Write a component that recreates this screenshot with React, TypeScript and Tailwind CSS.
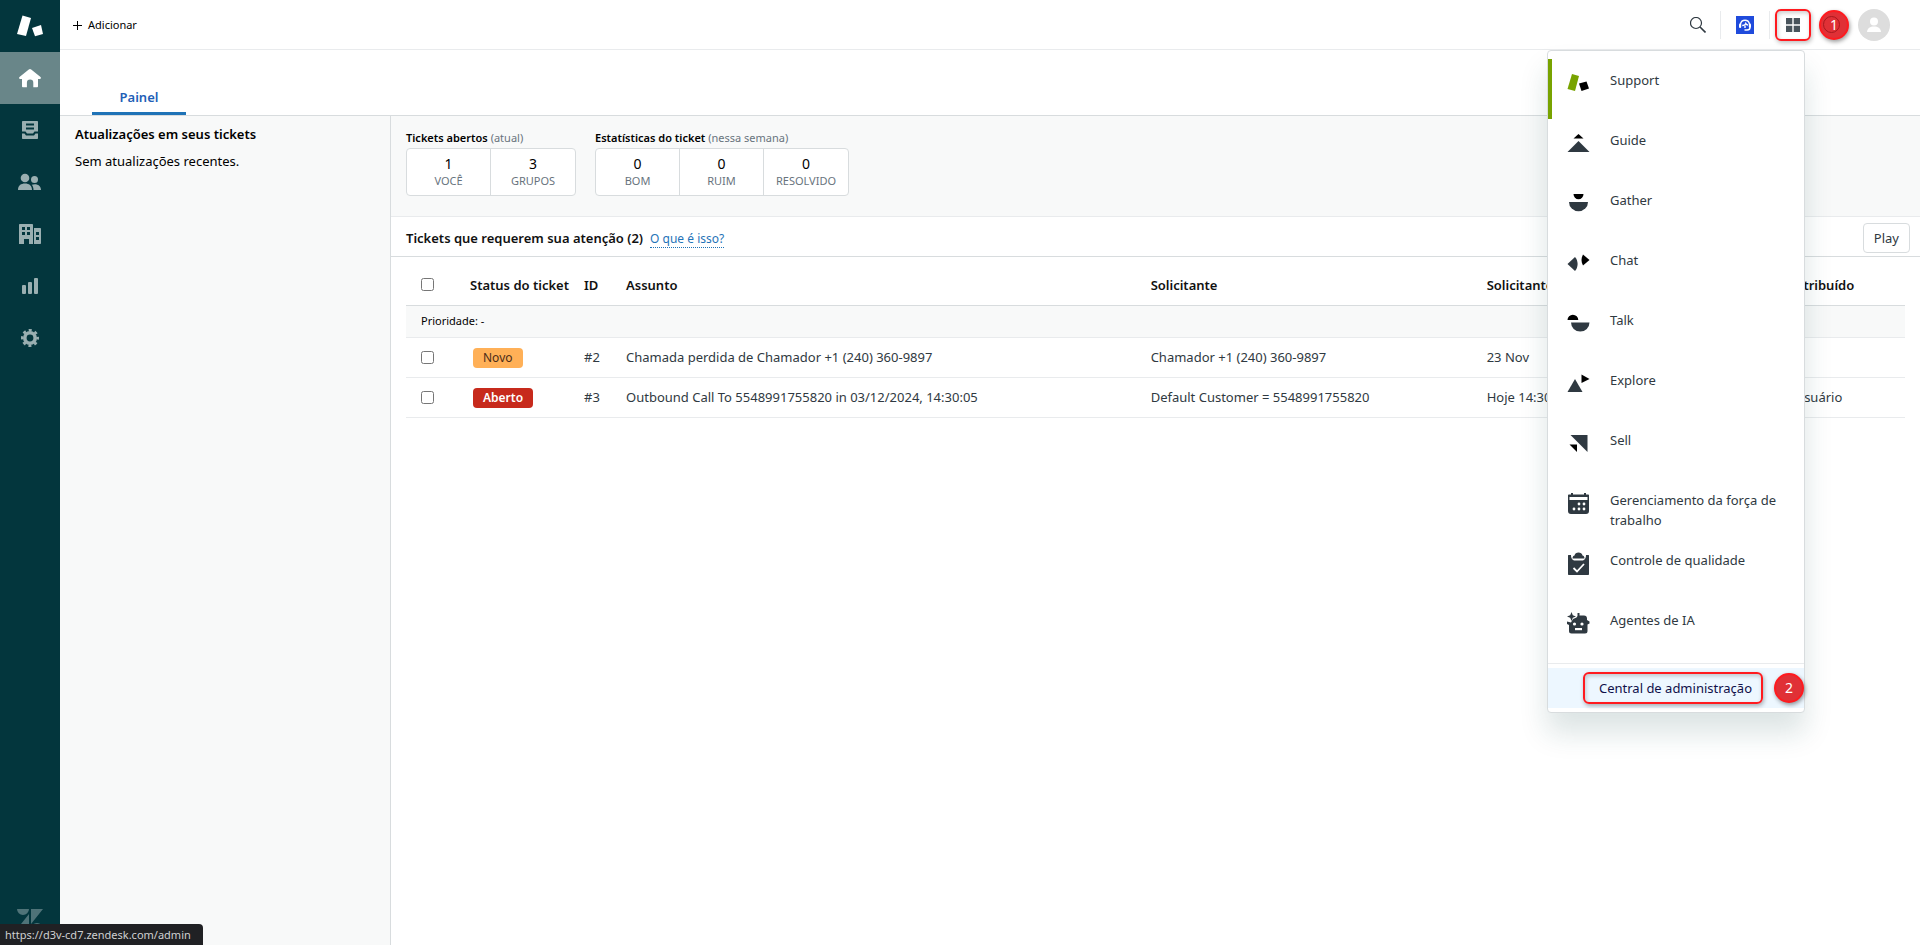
import type { ReactNode } from "react";

function SupportLogo({ a, b }: { a: string; b: string }) {
  return (
    <svg width="26" height="26" viewBox="0 0 26 26" aria-hidden="true">
      <path d="M5.500 2.500 14 5 9 23 0 21z" fill={a} />
      <path d="M15 15 24 12 26 21 18 23.200z" fill={b} />
    </svg>
  );
}

const nav: { label: string; icon: ReactNode }[] = [
  {
    label: "Início",
    icon: (
      <path d="M13 4c.4 0 .8.2 1.200.5l9.300 7.600c.9.800.4 2-.7 2H21v7.100c0 .6-.5 1.100-1.100 1.100h-3.600v-4.500a3.200 3.200 0 0 0-6.400 0v4.500H6.200c-.7 0-1.200-.5-1.200-1.100v-7.100H3.200c-1.100 0-1.600-1.200-.7-2l9.300-7.600c.4-.3.800-.5 1.200-.5z" />
    ),
  },
  {
    label: "Visualizações",
    icon: (
      <path
        fillRule="evenodd"
        d="M6 4h14c.6 0 1 .4 1 1v9.500h-3.500l-1.500 2h-6l-1.500-2H5V5c0-.6.400-1 1-1zm3 2.500v2h8v-2zm0 4v2h8v-2zM5 16.500h2.500l1.500 2h8l1.500-2H21V21c0 .6-.4 1-1 1H6c-.6 0-1-.4-1-1z"
      />
    ),
  },
  {
    label: "Clientes",
    icon: (
      <>
        <circle cx="8" cy="9" r="4.300" />
        <circle cx="17.500" cy="10.500" r="3.500" />
        <path d="M1 21c0-4.500 3-6.500 7-6.500s7 2 7 6.500zM16.500 21c0-2-.5-3.800-1.800-5.200 4.300-1.800 9.300.2 9.300 5.200z" />
      </>
    ),
  },
  {
    label: "Organizações",
    icon: (
      <path
        fillRule="evenodd"
        d="M3 3h12c.6 0 1 .4 1 1v19h-4v-5H7v5H2V4c0-.6.400-1 1-1zm2 3v3h3V6zm5 0v3h3V6zm-5 5v3h3v-3zm5 0v3h3v-3zM17 7h6c.6 0 1 .4 1 1v14c0 .6-.4 1-1 1h-6zm2 4v3h3v-3zm0 5v3h3v-3z"
      />
    ),
  },
  {
    label: "Relatórios",
    icon: (
      <>
        <rect x="5" y="12" width="4" height="9" rx="1" />
        <rect x="11" y="9" width="4" height="12" rx="1" />
        <rect x="17" y="5" width="4" height="16" rx="1" />
      </>
    ),
  },
  {
    label: "Configurações",
    icon: (
      <>
        <circle cx="13" cy="13" r="5.200" fill="none" stroke="currentColor" strokeWidth="3.600" />
        <circle cx="13" cy="13" r="7.800" fill="none" stroke="currentColor" strokeWidth="2.400" strokeDasharray="3.063 3.063" strokeDashoffset="1.530" />
      </>
    ),
  },
];

const dark = "#2f3941";
const products: { label: string; icon: ReactNode }[] = [
  {
    label: "Support",
    icon: (
      <>
        <path d="M5 2 12 4 8 19 .5 17z" fill="#78a300" />
        <path d="M12 11.500 19.500 9.500 22 16.500 14.500 19z" fill="#000" />
      </>
    ),
  },
  {
    label: "Guide",
    icon: (
      <>
        <path d="M11.500 2 16.500 6.500h-10z" fill="#000" />
        <path d="M11.500 9 22.500 20H.5z" fill={dark} />
      </>
    ),
  },
  {
    label: "Gather",
    icon: (
      <>
        <path d="M6.500 2h10a5 5.300 0 0 1-10 0z" fill="#000" />
        <path d="M2 10h19a9.500 9.300 0 0 1-19 0z" fill={dark} />
      </>
    ),
  },
  {
    label: "Chat",
    icon: (
      <>
        <path d="M8 5c3.500 4 3.500 10 0 14L.5 12z" fill={dark} />
        <path d="M16 2.500 22.500 8 16 13.500c-2-3.500-2-7.500 0-11z" fill="#000" />
      </>
    ),
  },
  {
    label: "Talk",
    icon: (
      <>
        <path d="M.5 8a5.400 5.200 0 0 1 10.800 0z" fill="#000" />
        <path d="M4 10.500h18.500a9.200 9 0 0 1-18.500 0z" fill={dark} />
      </>
    ),
  },
  {
    label: "Explore",
    icon: (
      <>
        <path d="M8 7 15.500 20H.5z" fill={dark} />
        <path d="M14.500 2.500 22.500 7l-8 4z" fill="#000" />
      </>
    ),
  },
  {
    label: "Sell",
    icon: (
      <>
        <path d="M3.500 3h17v17z" fill={dark} />
        <path d="M2.500 12.500h7.500V20z" fill="#000" />
      </>
    ),
  },
  {
    label: "Gerenciamento da força de trabalho",
    icon: (
      <g fill={dark}>
        <path d="M2 2.500h2V1h2v1.500h11V1h2v1.500h2c.6 0 1 .4 1 1V19a3 3 0 0 1-3 3H4a3 3 0 0 1-3-3V3.500c0-.6.400-1 1-1z" />
        <g fill="#fff">
          <path d="M2.500 5h18v3h-18z" />
          <circle cx="12" cy="12" r="1.400" />
          <circle cx="17" cy="12" r="1.400" />
          <circle cx="7" cy="17" r="1.400" />
          <circle cx="12" cy="17" r="1.400" />
          <circle cx="17" cy="17" r="1.400" />
        </g>
      </g>
    ),
  },
  {
    label: "Controle de qualidade",
    icon: (
      <>
        <path d="M1.500 3H4c0 4 2 5.500 4 5.500h7c2 0 4-1.500 4-5.500h2.500c.3 0 .5.2.5.5V22c0 .6-.4 1-1 1H2c-.6 0-1-.4-1-1V3.500c0-.3.200-.5.500-.5z" fill={dark} />
        <path d="M5.500 6.500c0-2 1-3 2-3C7.800 1.500 9.500.5 11.500.5s3.700 1 4 3c1 0 2 1 2 3z" fill={dark} />
        <path d="m6.500 16 3.500 3.500 7-7.500" fill="none" stroke="#fff" strokeWidth="1.800" />
      </>
    ),
  },
  {
    label: "Agentes de IA",
    icon: (
      <>
        <path d="M4.500 0 5.800 3.200 9 4.500 5.800 5.800 4.500 9 3.200 5.800 0 4.500 3.200 3.200z" fill={dark} />
        <path d="M10.500 4V1h2v2.500H17c1.900 0 3 1.300 3 3V8l2.500 1.500v2l-2 1V19a2.500 2.500 0 0 1-2.500 2.500H4.500A2.500 2.500 0 0 1 2 19v-6l-2-1V9.500l4 1 2-3.500 3.500-1.500z" fill={dark} />
        <circle cx="7.500" cy="12" r="1.600" fill="#fff" />
        <circle cx="15" cy="12" r="1.600" fill="#fff" />
        <path d="M8 16h7v2.200H8z" fill="#fff" />
      </>
    ),
  },
];

function StatGroup({ title, note, items }: { title: string; note: string; items: [string, string][] }) {
  return (
    <section>
      <h3 className="text-[11px] leading-5 font-semibold text-black">
        {title} <span className="font-normal text-[#68737d]">{note}</span>
      </h3>
      <dl className="flex divide-x divide-[#d8dcde] rounded border border-[#d8dcde] bg-white">
        {items.map(([value, label]) => (
          <div key={label} className="flex h-[46px] w-[84px] flex-col-reverse items-center justify-center text-center">
            <dt className="text-[11px] leading-4 text-[#68737d]">{label}</dt>
            <dd className="text-[14px] leading-[18px] text-black">{value}</dd>
          </div>
        ))}
      </dl>
    </section>
  );
}

const tickets = [
  {
    status: "Novo",
    badge: "bg-[#ffb057] text-[#4c2c17]",
    id: "#2",
    subject: "Chamada perdida de Chamador +1 (240) 360-9897",
    requester: "Chamador +1 (240) 360-9897",
    updated: "23 Nov",
    assignee: "",
  },
  {
    status: "Aberto",
    badge: "bg-[#c72a1c] text-white font-semibold",
    id: "#3",
    subject: "Outbound Call To 5548991755820 in 03/12/2024, 14:30:05",
    requester: "Default Customer = 5548991755820",
    updated: "Hoje 14:30",
    assignee: "Usuário",
  },
];

const check = "block size-[13px]";

function StepBadge({ n }: { n: number }) {
  return (
    <span className="flex size-[30px] shrink-0 items-center justify-center rounded-full border-2 border-[#ff1a1f] bg-[#e03036] text-[14px] text-white shadow-[1px_2px_4px_rgba(0,0,0,0.4)]">
      {n}
    </span>
  );
}

export default function App() {
  return (
    <div className="flex min-h-screen bg-white font-['Noto_Sans','Open_Sans',sans-serif] text-[13px] leading-5 text-[#2f3941]">
      <nav aria-label="Principal" className="flex w-[60px] shrink-0 flex-col items-center bg-[#03363d] text-[#9aafb1]">
        <div className="flex h-[52px] items-center">
          <SupportLogo a="#fff" b="#fff" />
        </div>
        {nav.map(({ label, icon }, i) => (
          <a
            key={label}
            href="#"
            aria-label={label}
            className={i === 0 ? "flex h-[52px] w-full items-center justify-center bg-[#698689] text-white" : "flex h-[52px] w-full items-center justify-center"}
          >
            <svg width="26" height="26" viewBox="0 0 26 26" fill="currentColor" aria-hidden="true">
              {icon}
            </svg>
          </a>
        ))}
        <svg className="mt-auto mb-4 text-[#4f7378]" width="26" height="20" viewBox="0 0 26 20" fill="currentColor" aria-hidden="true">
          <path d="M0 0h12a6 6 0 0 1-12 0zM12 5v15H0zM14 0h12L14 15zM14 20a6 6 0 0 1 12 0z" />
        </svg>
      </nav>

      <div className="flex min-w-0 flex-1 flex-col">
        <header className="relative flex h-[50px] shrink-0 items-center border-b border-[#e9ebed] bg-white">
          <button type="button" className="flex items-center gap-1.5 pt-px pl-[13px] text-[11px] text-black">
            <svg width="9" height="9" viewBox="0 0 9 9" stroke="currentColor" aria-hidden="true">
              <path d="M4.500 0v9M0 4.500h9" />
            </svg>
            Adicionar
          </button>

          <div className="ml-auto flex items-center pr-[30px]">
            <button type="button" aria-label="Pesquisar" className="pr-3.5">
              <svg width="16" height="16" viewBox="0 0 16 16" fill="none" stroke="#2f3941" aria-hidden="true">
                <circle cx="6" cy="6" r="5.500" strokeWidth="1.200" />
                <path d="m10 10 5.500 5.500" strokeWidth="1.600" />
              </svg>
            </button>
            <span className="h-7 w-px bg-[#e9ebed]" />
            <button type="button" aria-label="Atendimento" className="px-[15px]">
              <svg width="18" height="18" viewBox="0 0 18 18" aria-hidden="true">
                <path d="M0 0h18v18H0z" fill="#1f4bdc" />
                <path d="M4.500 8a4.600 4.800 0 0 1 9 0" fill="none" stroke="#fff" strokeWidth="1.400" />
                <rect x="3" y="7.500" width="2.200" height="4.500" rx="1" fill="#fff" />
                <rect x="12.800" y="7.500" width="2.200" height="4.500" rx="1" fill="#fff" />
                <path d="M6.200 9.500c2 0 3.200-.8 3.600-2 .5 1 1.200 1.500 2.200 1.500" fill="none" stroke="#fff" strokeWidth="1.400" />
                <path d="M9 9.500v2.500M14 11.500c0 1.700-1 2.500-2.800 2.500H8.500" fill="none" stroke="#fff" strokeWidth="1.400" />
              </svg>
            </button>
            <span className="h-7 w-px bg-[#e9ebed]" />
            <button
              type="button"
              aria-label="Produtos do Zendesk"
              className="ml-[5px] flex h-8 w-9 items-center justify-center rounded-md border-2 border-[#ff1a1f] shadow-[1px_2px_4px_rgba(0,0,0,0.25),inset_1px_2px_4px_rgba(0,0,0,0.2)]"
            >
              <svg width="14" height="14" viewBox="0 0 14 14" fill="#49545c" aria-hidden="true">
                <path d="M0 0h6.300v6.300H0zM7.700 0H14v6.300H7.700zM0 7.700h6.300V14H0zM7.700 7.700H14V14H7.700z" />
              </svg>
            </button>
            <span className="relative ml-2">
              <StepBadge n={1} />
              <span className="absolute top-1.5 left-1 size-[17px] rounded-full border border-[#a8181d]" />
            </span>
            <button type="button" aria-label="Perfil" className="ml-[9px] size-8 rounded-full bg-[#ddd]">
              <svg width="32" height="32" viewBox="0 0 32 32" fill="#fff" aria-hidden="true">
                <circle cx="16" cy="12.500" r="4" />
                <path d="M9 23c.5-4 3-5.500 7-5.500s6.500 1.500 7 5.500z" />
              </svg>
            </button>
          </div>

          <div className="absolute top-[50px] right-[115px] z-10 w-[258px] rounded border border-[#d8dcde] bg-white py-2 shadow-[0_20px_28px_0_rgba(23,73,77,0.15)]">
            <ul>
              {products.map(({ label, icon }, i) => (
                <li key={label}>
                  <a
                    href="#"
                    className={
                      i === 0
                        ? "flex h-[60px] gap-5 border-l-4 border-[#78a300] pt-[11px] pr-4 pl-[15px]"
                        : "flex h-[60px] gap-5 border-l-4 border-transparent pt-[11px] pr-4 pl-[15px]"
                    }
                  >
                    <svg className="mt-0.5 shrink-0" width="23" height="24" viewBox="0 0 23 24" aria-hidden="true">
                      {icon}
                    </svg>
                    <span>{label}</span>
                  </a>
                </li>
              ))}
            </ul>
            <div className="mt-1 border-t border-[#e9ebed] pt-1">
              <a href="#" className="-mb-1 flex h-10 items-center justify-end bg-[#edf7ff] text-[#10104a]">
                <span className="rounded-md border-2 border-[#ff1a1f] py-1 pr-[9px] pl-3.5 shadow-[1px_2px_4px_rgba(0,0,0,0.3),inset_1px_2px_4px_rgba(0,0,0,0.2)]">
                  Central de administração
                </span>
                <span className="ml-[11px]">
                  <StepBadge n={2} />
                </span>
              </a>
            </div>
          </div>
        </header>

        <div className="flex h-[66px] shrink-0 items-end border-b border-[#d8dcde] pl-8">
          <a href="#" className="w-[94px] border-b-[3px] border-[#1f73b7] pt-1 pb-[5px] text-center font-semibold text-[#1f5fb7]">
            Painel
          </a>
        </div>

        <div className="flex min-h-0 flex-1">
          <aside className="w-[331px] shrink-0 border-r border-[#d8dcde] bg-[#f8f9f9] px-[15px] pt-2 text-black">
            <h2 className="font-semibold">Atualizações em seus tickets</h2>
            <p className="mt-[7px]">Sem atualizações recentes.</p>
          </aside>

          <main className="min-w-0 flex-1">
            <div className="flex h-[101px] gap-[19px] border-b border-[#e9ebed] bg-[#f8f9f9] px-[15px] pt-3">
              <StatGroup title="Tickets abertos" note="(atual)" items={[["1", "VOCÊ"], ["3", "GRUPOS"]]} />
              <StatGroup title="Estatísticas do ticket" note="(nessa semana)" items={[["0", "BOM"], ["0", "RUIM"], ["0", "RESOLVIDO"]]} />
            </div>

            <div className="flex h-10 items-center border-b border-[#d8dcde] pt-[3px] pr-2.5 pl-[15px]">
              <div className="flex items-baseline gap-[7px]">
                <h2 className="font-semibold text-[#111]">Tickets que requerem sua atenção (2)</h2>
                <a href="#" className="border-b border-dotted border-[#1f73b7] text-[12px] leading-4 text-[#1f73b7]">
                  O que é isso?
                </a>
              </div>
              <button type="button" className="ml-auto h-[30px] rounded border border-[#d8dcde] bg-white px-2.5">
                Play
              </button>
            </div>

            <div className="px-[15px] pt-2">
              <table className="w-full table-fixed border-collapse text-left">
                <colgroup>
                  <col className="w-[64px]" />
                  <col className="w-[114px]" />
                  <col className="w-[42px]" />
                  <col className="w-[35%]" />
                  <col className="w-[336px]" />
                  <col className="w-[308px]" />
                  <col />
                </colgroup>
                <thead>
                  <tr className="h-10 border-b border-[#d8dcde] text-[#111]">
                    <th className="pl-[15px]">
                      <input type="checkbox" aria-label="Selecionar todos" className={check} />
                    </th>
                    <th className="font-semibold whitespace-nowrap">Status do ticket</th>
                    <th className="font-semibold">ID</th>
                    <th className="font-semibold">Assunto</th>
                    <th className="font-semibold">Solicitante</th>
                    <th className="font-semibold">Solicitante atualizado</th>
                    <th className="font-semibold">Atribuído</th>
                  </tr>
                </thead>
                <tbody>
                  <tr className="h-8 border-b border-[#e9ebed] bg-[#f8f9f9]">
                    <td colSpan={7} className="pl-[15px] text-[11px] text-black">
                      Prioridade: -
                    </td>
                  </tr>
                  {tickets.map((t) => (
                    <tr key={t.id} className="h-10 border-b border-[#e9ebed]">
                      <td className="pl-[15px]">
                        <input type="checkbox" aria-label={"Selecionar ticket " + t.id} className={check} />
                      </td>
                      <td className="pl-[3px]">
                        <span className={"inline-block rounded px-2.5 text-[12px] leading-5 " + t.badge}>{t.status}</span>
                      </td>
                      <td>{t.id}</td>
                      <td>{t.subject}</td>
                      <td>{t.requester}</td>
                      <td>{t.updated}</td>
                      <td>{t.assignee}</td>
                    </tr>
                  ))}
                </tbody>
              </table>
            </div>
          </main>
        </div>
      </div>

      <div className="fixed bottom-0 left-0 z-20 h-[21px] rounded-tr bg-[#202124] pr-3 pl-[5px] text-[11px] leading-[21px] text-[#cfd0d2]">
        https://d3v-cd7.zendesk.com/admin
      </div>
    </div>
  );
}
